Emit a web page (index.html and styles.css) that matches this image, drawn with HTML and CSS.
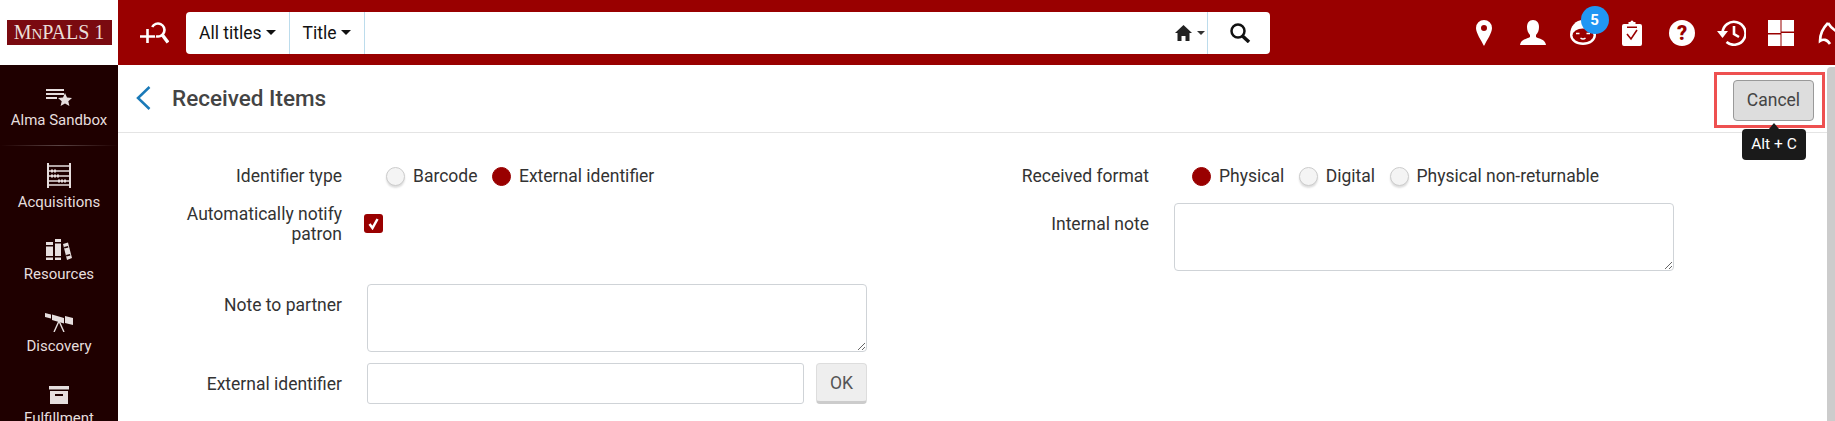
FILE: index.html
```html
<!DOCTYPE html>
<html lang="en">
<head>
    <meta charset="UTF-8">
    <title>Received Items</title>
    <link rel="stylesheet" href="styles.css">
</head>
<body>
    <header class="topbar">
        <div class="logo-box"><span class="logo">M<small>N</small>PALS 1</span></div>
        <svg class="add-search" width="29" height="24" viewBox="0 0 29 24" fill="none" stroke="#fff" stroke-width="2.600">
            <path d="M12.200 6A6.500 6.500 0 1 1 16 15.200"/>
            <path d="M22 13.500l6 8" stroke-width="3.500"/>
            <path d="M0 15.500h15M7.500 8v14"/>
        </svg>
        <div class="search">
            <div class="scope">All titles <i class="caret"></i></div>
            <div class="scope">Title <i class="caret"></i></div>
            <div class="search-input"></div>
            <div class="home-scope">
                <svg width="17" height="16" viewBox="0 0 17 16" fill="#222"><path d="M8.500 0L17 8h-2.500v8h-4v-5h-4v5h-4V8H0z"/></svg>
                <i class="caret small"></i>
            </div>
            <div class="search-btn">
                <svg width="22" height="20" viewBox="0 0 22 20" fill="none" stroke="#111" stroke-width="2.500"><circle cx="9" cy="8" r="6.500"/><path d="M13.500 13l6.500 6" stroke-width="3.500"/></svg>
            </div>
        </div>
        <nav class="top-icons">
            <div class="top-icon"><svg width="16" height="26" viewBox="0 0 16 26" fill="#fff"><path fill-rule="evenodd" d="M8 0a8 8 0 0 1 8 8c0 5-5 12-8 18C5 20 0 13 0 8a8 8 0 0 1 8-8zm0 5a3 3 0 1 0 0 6 3 3 0 0 0 0-6z"/></svg></div>
            <div class="top-icon"><svg width="26" height="25" viewBox="0 0 26 25" fill="#fff"><path d="M13 0c4 0 6 3 6 7 0 3-1 6-3 8v2c3 2 9 2 10 8H0c1-6 7-6 10-8v-2C8 13 7 10 7 7c0-4 2-7 6-7z"/></svg></div>
            <div class="top-icon">
                <div class="tasks">
                    <svg width="26" height="25" viewBox="0 0 26 25"><path fill="#fff" d="M13 0c7 0 13 6 13 15 0 6-6 10-13 10S0 21 0 15C0 6 6 0 13 0z"/><ellipse cx="13" cy="15.500" rx="10.500" ry="7" fill="#990000"/><path fill="none" stroke="#fff" stroke-width="1.500" d="M6 13.500h3.500M16.500 13.500H20M10.500 18c1.500 1.200 3.500 1.200 5 0"/></svg>
                    <span class="badge">5</span>
                </div>
            </div>
            <div class="top-icon"><svg width="20" height="26" viewBox="0 0 20 26"><path fill="#fff" d="M2 4h4.500V2h2a1.500 1.500 0 0 1 3 0h2v2H18a2 2 0 0 1 2 2v18a2 2 0 0 1-2 2H2a2 2 0 0 1-2-2V6a2 2 0 0 1 2-2z"/><path fill="#990000" d="M5 6.500h10V8H5z"/><path fill="none" stroke="#990000" stroke-width="1.600" d="M5 14l4 5 6-9"/></svg></div>
            <div class="top-icon"><svg width="26" height="26" viewBox="0 0 26 26"><circle cx="13" cy="13" r="13" fill="#fff"/><text x="13" y="20" class="help-mark">?</text></svg></div>
            <div class="top-icon"><svg width="29" height="26" viewBox="0 0 29 26" fill="none" stroke="#fff" stroke-width="2.600"><path d="M5.500 13a11.500 11.500 0 1 1 4 9"/><path d="M17 6v8l5 3"/><path d="M0 11h11l-5.500 7z" fill="#fff" stroke="none"/></svg></div>
            <div class="top-icon"><svg width="26" height="26" viewBox="0 0 26 26" fill="#fff"><path d="M0 0h12.500v13H0zM13.500 0H26v11.500H13.500zM13.500 13H26v13H13.500zM0 14.500h12.500V26H0z"/></svg></div>
            <div class="top-icon"><svg width="24" height="26" viewBox="0 0 24 26" fill="none" stroke="#fff" stroke-width="2.600"><path d="M10 3C5 8 2 14 2 21c3-2 7-2 10 3M10 3c3 5 7 8 12 10"/></svg></div>
        </nav>
    </header>

    <div class="main">
        <aside class="sidebar">
            <div class="side-item first">
                <svg width="26" height="17" viewBox="0 0 26 17" fill="#e6dede"><path d="M0 0h18v2H0zM0 4h18v2H0zM0 8h11v2H0z"/><path d="M19 4l2 4.500 5 .5-3.700 3.300 1.100 4.700-4.400-2.500-4.400 2.500 1.100-4.700L12 9l5-.5z"/></svg>
                <span>Alma Sandbox</span>
            </div>
            <div class="side-item">
                <svg width="24" height="25" viewBox="0 0 24 25" fill="none" stroke="#e6dede"><path stroke-width="2" d="M1 0v25M23 0v25"/><path stroke-width="1.500" d="M1 3h22M1 22h22M1 8h22M1 13h22M1 18h22"/><path stroke-width="3" stroke-dasharray="2 1" d="M4 8h6M4 13h9M11 18h9"/></svg>
                <span>Acquisitions</span>
            </div>
            <div class="side-item">
                <svg width="26" height="21" viewBox="0 0 26 21" fill="#e6dede"><path d="M0 3h7v18H0zM9 0h6v21H9zM17 5l5-1.500L26 19l-5 2z"/><path fill="#1f0000" d="M0 6h7v1.500H0zM0 17h7v1.500H0zM9 3h6v1.500H9zM9 17h6v1.500H9zM18 8l4-1 .4 1.500-4 1zM20 16l4-1 .4 1.500-4 1z"/></svg>
                <span>Resources</span>
            </div>
            <div class="side-item">
                <svg width="28" height="19" viewBox="0 0 28 19" fill="#e6dede"><path d="M0 0l6 1.500v4L0 4zM7 1.500L19 5v5.500L7 7zM20 3l8 2v7l-8-2z"/><path fill="none" stroke="#e6dede" stroke-width="1.400" d="M14 8L9 19M14 8l5 11"/></svg>
                <span>Discovery</span>
            </div>
            <div class="side-item">
                <svg width="20" height="18" viewBox="0 0 20 18" fill="#e6dede"><path d="M0 0h20v3.500H0zM1 5h18v13H1z"/><path fill="#1f0000" d="M6 8h8v2H6z"/></svg>
                <span>Fulfillment</span>
            </div>
        </aside>

        <main class="content">
            <div class="page-head">
                <svg class="back" width="15" height="24" viewBox="0 0 15 24" fill="none" stroke="#1a7ab8" stroke-width="2.500"><path d="M13.500 1L2 12l11.500 11"/></svg>
                <h1 class="page-title">Received Items</h1>
                <div class="cancel-wrap">
                    <button class="cancel" type="button">Cancel</button>
                </div>
                <div class="tooltip">Alt + C</div>
            </div>

            <form class="form">
                <div class="col col-left">
                    <div class="row row-radio">
                        <label class="lbl">Identifier type</label>
                        <div class="radios">
                            <span class="radio"></span><span class="opt">Barcode</span>
                            <span class="radio on"></span><span class="opt">External identifier</span>
                        </div>
                    </div>
                    <div class="row row-notify">
                        <label class="lbl">Automatically notify patron</label>
                        <span class="check">
                            <svg width="13" height="13" viewBox="0 0 13 13" fill="none" stroke="#fff" stroke-width="2.500"><path d="M2.500 7l3 4 5-9"/></svg>
                        </span>
                    </div>
                    <div class="row row-note">
                        <label class="lbl">Note to partner</label>
                        <textarea class="area"></textarea>
                    </div>
                    <div class="row row-ext">
                        <label class="lbl">External identifier</label>
                        <input class="text-input" type="text">
                        <button class="ok" type="button">OK</button>
                    </div>
                </div>
                <div class="col col-right">
                    <div class="row row-radio">
                        <label class="lbl">Received format</label>
                        <div class="radios">
                            <span class="radio on"></span><span class="opt">Physical</span>
                            <span class="radio"></span><span class="opt">Digital</span>
                            <span class="radio"></span><span class="opt">Physical non-returnable</span>
                        </div>
                    </div>
                    <div class="row row-internal">
                        <label class="lbl">Internal note</label>
                        <textarea class="area"></textarea>
                    </div>
                </div>
            </form>
            <div class="scrollbar"></div>
        </main>
    </div>
</body>
</html>
```

FILE: styles.css
```css
* {
    box-sizing: border-box;
}

html, body {
    height: 100%;
}

body {
    margin: 0;
    overflow: hidden;
    font-family: Roboto, "Liberation Sans", sans-serif;
    font-size: 17.5px;
    color: #333;
    background-color: #fff;
}

.topbar {
    display: flex;
    align-items: center;
    height: 65px;
    overflow: hidden;
    background-color: #990000;
}

.logo-box {
    display: flex;
    flex: none;
    align-items: center;
    justify-content: center;
    width: 118px;
    height: 65px;
    background-color: #fff;
}

.logo {
    width: 105px;
    height: 25px;
    background-color: #7a0a10;
    color: #eadfd8;
    font-family: "Liberation Serif", serif;
    font-size: 20px;
    line-height: 25px;
    text-align: center;
    white-space: nowrap;
}

.logo small {
    font-size: 15px;
}

.add-search {
    flex: none;
    margin-left: 22px;
    margin-right: 17px;
}

.search {
    display: flex;
    flex: none;
    width: 1084px;
    height: 42px;
    background-color: #fff;
    border-radius: 4px;
    color: #111;
}

.scope {
    display: flex;
    align-items: center;
    gap: 4px;
    padding: 0 13px;
    border-right: 1px solid #bcdcec;
}

.caret {
    display: inline-block;
    border-top: 5px solid #111;
    border-left: 5px solid transparent;
    border-right: 5px solid transparent;
}

.caret.small {
    border-top-color: #333;
    border-left-width: 4px;
    border-right-width: 4px;
    border-top-width: 4px;
}

.search-input {
    flex: 1;
}

.home-scope {
    display: flex;
    align-items: center;
    gap: 5px;
    padding-right: 2px;
    border-right: 1px solid #bcdcec;
}

.search-btn {
    display: flex;
    align-items: center;
    justify-content: center;
    width: 62px;
    padding-left: 2px;
}

.top-icons {
    display: flex;
    flex: none;
    align-items: center;
    margin-left: 188.75px;
}

.top-icon {
    display: flex;
    flex: none;
    align-items: center;
    justify-content: center;
    width: 49.5px;
}

.top-icon svg {
    display: block;
}

.tasks {
    position: relative;
    width: 26px;
    height: 25px;
}

.badge {
    position: absolute;
    left: 11px;
    top: -14px;
    width: 28px;
    height: 28px;
    border-radius: 50%;
    background-color: #2196f3;
    color: #fff;
    font-size: 15px;
    font-weight: 700;
    line-height: 28px;
    text-align: center;
}

.help-mark {
    font-family: Roboto, sans-serif;
    font-size: 20px;
    font-weight: 900;
    fill: #990000;
    text-anchor: middle;
}

.main {
    display: flex;
    height: calc(100% - 65px);
}

.sidebar {
    flex: none;
    width: 118px;
    overflow: hidden;
    background-color: #1f0000;
    color: #e6dede;
    font-size: 15px;
}

.side-item {
    display: flex;
    flex-direction: column;
    align-items: center;
    justify-content: flex-end;
    height: 72px;
    padding-bottom: 7px;
}

.side-item svg {
    display: block;
    flex: none;
    margin-bottom: 5px;
}

.side-item.first {
    height: 81px;
    padding-bottom: 17px;
    background-image: linear-gradient(90deg, #1f0000, #5a4444 50%, #1f0000);
    background-size: 100% 1px;
    background-repeat: no-repeat;
    background-position: bottom;
}

.content {
    position: relative;
    flex: 1;
    overflow: hidden;
}

.page-head {
    position: relative;
    display: flex;
    align-items: center;
    height: 68px;
    padding-left: 18px;
    padding-bottom: 2px;
    border-bottom: 1px solid #e4e4e4;
}

.back {
    margin-right: 21px;
}

.page-title {
    margin: 0;
    font-size: 22.5px;
    font-weight: 500;
    color: #444;
}

.cancel-wrap {
    position: absolute;
    left: 1596px;
    top: 7px;
    display: flex;
    align-items: center;
    justify-content: center;
    width: 111px;
    height: 56px;
    padding-left: 8px;
    border: 3px solid #ee5050;
}

.cancel {
    width: 81px;
    height: 41px;
    padding: 0;
    border: 1px solid #999;
    border-radius: 4px;
    background-color: #ddd;
    color: #444;
    font-family: inherit;
    font-size: 17.5px;
}

.tooltip {
    position: absolute;
    left: 1624px;
    top: 64px;
    width: 64px;
    height: 31px;
    border-radius: 4px;
    background-color: #1a1a1a;
    color: #fff;
    font-size: 15.5px;
    line-height: 31px;
    text-align: center;
}

.tooltip::before {
    content: "";
    position: absolute;
    left: 27px;
    top: -6px;
    border-bottom: 6px solid #1a1a1a;
    border-left: 5px solid transparent;
    border-right: 5px solid transparent;
}

.form {
    display: flex;
}

.col-left {
    width: 749px;
}

.col-right {
    flex: 1;
}

.row {
    display: flex;
}

.lbl {
    flex: none;
    text-align: right;
    line-height: 20px;
}

.col-left .lbl {
    width: 224px;
    padding-left: 54px;
}

.col-right .lbl {
    width: 282px;
}

.radios {
    display: flex;
    align-items: center;
}

.radio {
    flex: none;
    width: 19px;
    height: 19px;
    border: 1px solid #ccc;
    border-radius: 50%;
    background-color: #f4f4f4;
    box-shadow: 0 2px 2px #ddd;
}

.radio.on {
    border-color: #990000;
    background-color: #990000;
    box-shadow: none;
}

.opt {
    margin-left: 8px;
    margin-right: 14.5px;
    white-space: nowrap;
}

.row-radio {
    align-items: center;
    margin-top: 33px;
    height: 20px;
}

.col-left .radios {
    margin-left: 44px;
}

.col-right .radios {
    margin-left: 43px;
}

.row-notify {
    margin-top: 18px;
    height: 78px;
}

.check {
    display: flex;
    align-items: center;
    justify-content: center;
    width: 19px;
    height: 19px;
    margin-left: 22px;
    margin-top: 10px;
    border-radius: 3px;
    background-color: #990000;
}

.area {
    display: block;
    width: 500px;
    height: 68px;
    border: 1px solid #cfd3d7;
    border-radius: 4px;
    background-color: #fff;
    margin-left: 25px;
}

.row-note .lbl,
.row-internal .lbl {
    padding-top: 11px;
}

.row-ext {
    align-items: center;
    margin-top: 11px;
}

.row-note {
    margin-top: 2px;
}

.row-internal {
    margin-top: 17px;
}

.text-input {
    width: 437px;
    height: 41px;
    margin-left: 25px;
    border: 1px solid #cfd3d7;
    border-radius: 3px;
}

.ok {
    width: 51px;
    height: 41px;
    padding: 0;
    margin-left: 12px;
    border: 1px solid #ddd;
    border-bottom: 3px solid #ccc;
    border-radius: 4px;
    background-color: #eee;
    color: #555;
    font-family: inherit;
    font-size: 17.5px;
}

.scrollbar {
    position: absolute;
    right: 0;
    top: 2px;
    width: 8px;
    height: 100%;
    background-color: #ccc;
    border-radius: 4px 0 0 0;
}
```
